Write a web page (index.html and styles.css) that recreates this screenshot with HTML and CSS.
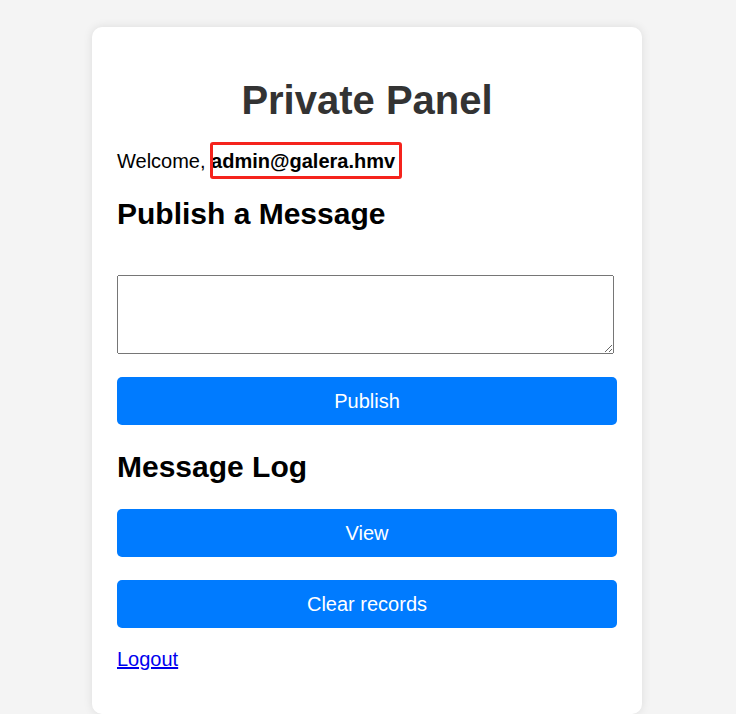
FILE: index.html
```html
<!DOCTYPE html>
<html>
<head>
    <meta charset='utf-8'>
    <title>Private Panel</title>
    <meta name='viewport' content='width=device-width, initial-scale=1'>
    <link rel="stylesheet" href="styles.css">
</head>
<body>
    <div class="panel">
        <h1>Private Panel</h1>
        <p>Welcome, <strong class="mark">admin@galera.hmv</strong></p>

        <h2>Publish a Message</h2>
        <form class="publish" onsubmit="return false">
            <textarea name="message"></textarea>
            <button type="submit">Publish</button>
        </form>

        <h2>Message Log</h2>
        <form onsubmit="return false">
            <button type="submit">View</button>
        </form>
        <form onsubmit="return false">
            <button type="submit">Clear records</button>
        </form>

        <p><a href="#">Logout</a></p>
    </div>
</body>
</html>
```

FILE: styles.css
```css
body {
    margin: 0;
    padding-right: 2px;
    font-family: "Liberation Sans", Arial, sans-serif;
    font-size: 20px;
    background-color: #f4f4f4;
    color: #000;
}
.panel {
    width: 500px;
    margin: 27px auto 0;
    padding: 24px 25px 23px;
    background-color: #fff;
    border-radius: 10px;
    box-shadow: 0 0 10px rgba(0, 0, 0, 0.1);
}
h1 {
    text-align: center;
    color: #333;
}
.mark {
    position: relative;
}
/* red highlight drawn round the user name */
.mark::after {
    content: "";
    position: absolute;
    left: -1px;
    right: -7px;
    top: -8px;
    bottom: -7px;
    border: 3px solid #f5231c;
    border-radius: 3px;
}
.publish textarea {
    display: block;
    box-sizing: border-box;
    width: calc(100% - 3px);
    height: 79px;
    margin: 44px 0 0;
}
button {
    display: block;
    width: 100%;
    margin-top: 23px;
    padding: 12px;
    line-height: 24px;
    font-family: inherit;
    font-size: 20px;
    color: #fff;
    background-color: #007bff;
    border: none;
    border-radius: 5px;
    cursor: pointer;
}
button:hover {
    background-color: #0069d9;
}
a {
    color: #0000ee;
}
```
